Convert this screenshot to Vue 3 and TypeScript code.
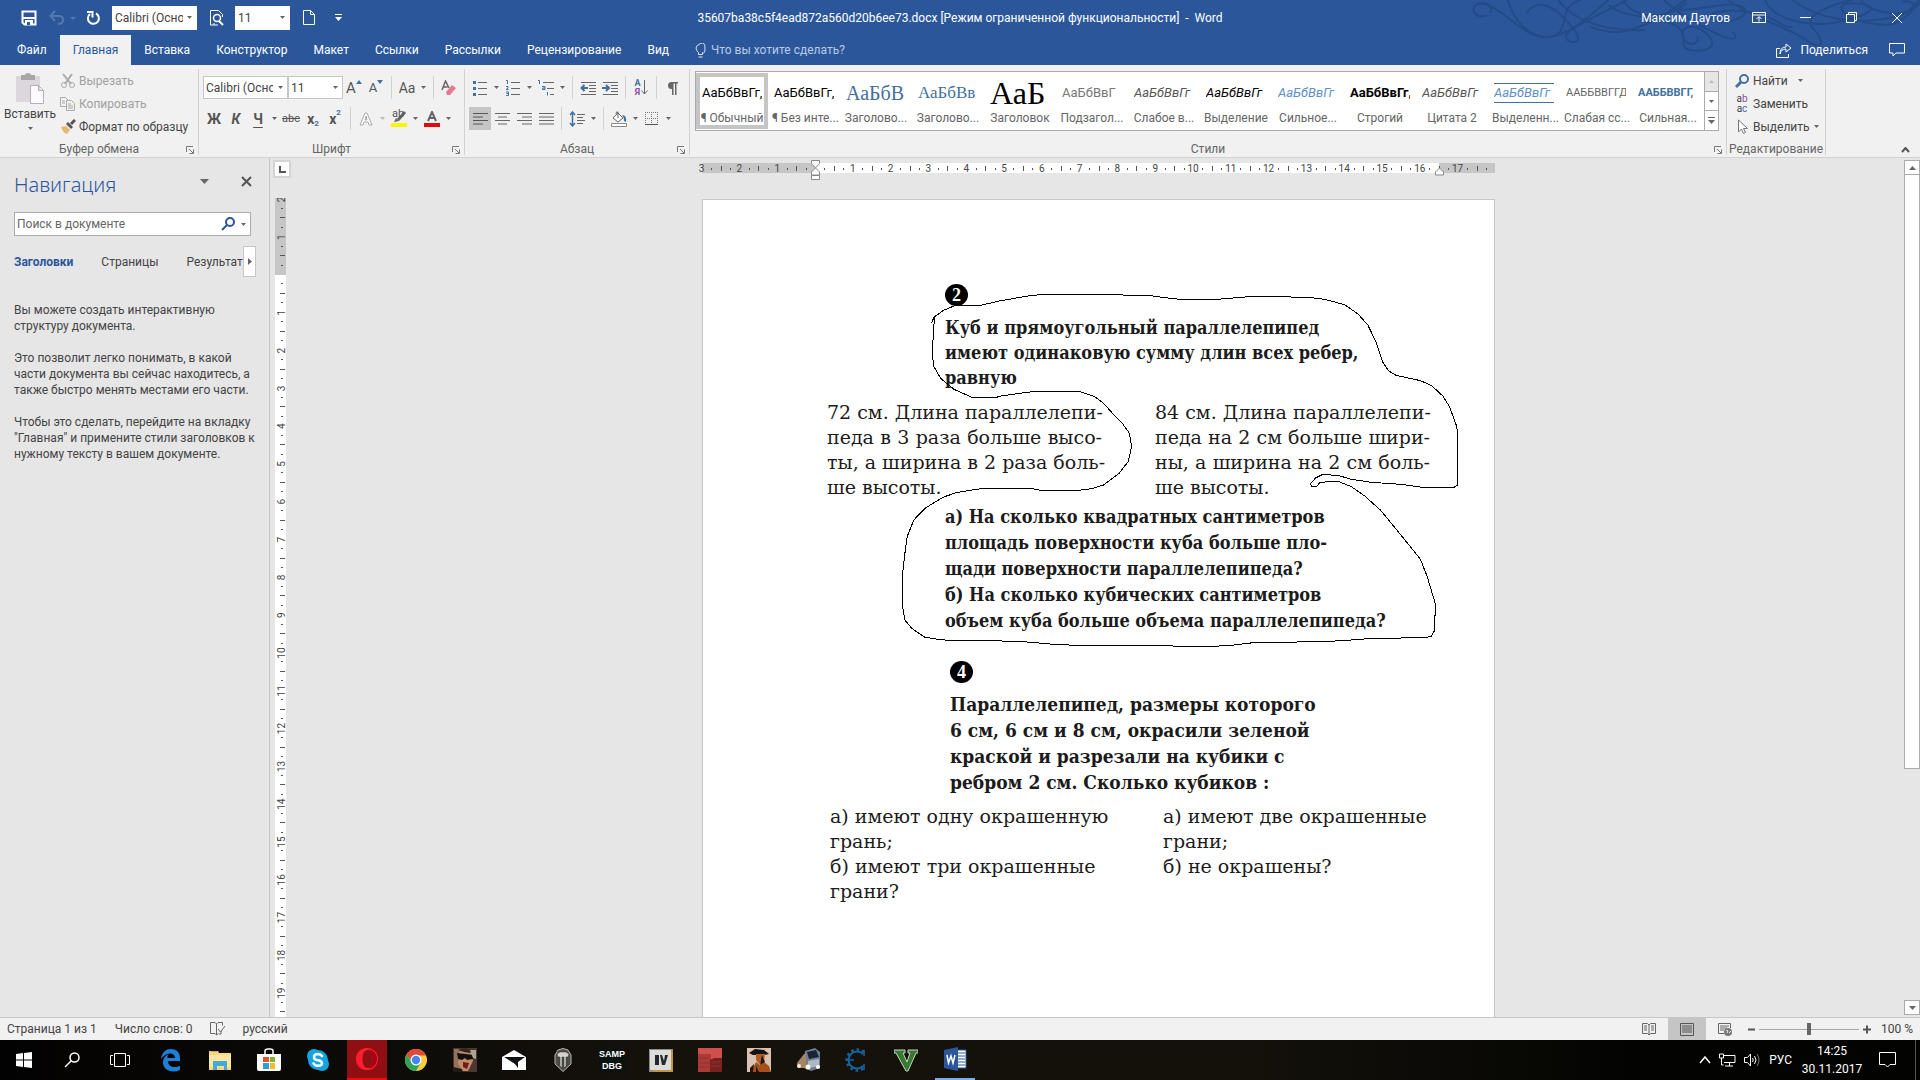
<script setup lang="ts">
import { ref } from 'vue'

interface StyleItem { sample: string; label: string; kind: string }
interface Tick { pos: number; kind: 'num' | 'dot' | 'bar'; text: string }

const tabs = ['Файл', 'Главная', 'Вставка', 'Конструктор', 'Макет', 'Ссылки', 'Рассылки', 'Рецензирование', 'Вид']
const activeTab = ref('Главная')
const query = ref('')
const zoom = ref(100)

const styles: StyleItem[] = [
  { sample: 'АаБбВвГг,', label: '¶ Обычный', kind: 'plain' },
  { sample: 'АаБбВвГг,', label: '¶ Без инте...', kind: 'plain' },
  { sample: 'АаБбВ', label: 'Заголово...', kind: 'h1' },
  { sample: 'АаБбВв', label: 'Заголово...', kind: 'h2' },
  { sample: 'АаБ', label: 'Заголовок', kind: 'title' },
  { sample: 'АаБбВвГ', label: 'Подзагол...', kind: 'subtitle' },
  { sample: 'АаБбВвГг', label: 'Слабое в...', kind: 'soft' },
  { sample: 'АаБбВвГг', label: 'Выделение', kind: 'em' },
  { sample: 'АаБбВвГг', label: 'Сильное...', kind: 'blue-em' },
  { sample: 'АаБбВвГг,', label: 'Строгий', kind: 'strong' },
  { sample: 'АаБбВвГг', label: 'Цитата 2', kind: 'soft' },
  { sample: 'АаБбВвГг', label: 'Выделенн...', kind: 'quote' },
  { sample: 'ААББВВГГД', label: 'Слабая сс...', kind: 'caps' },
  { sample: 'ААББВВГГ,', label: 'Сильная...', kind: 'caps-blue' },
]

const CM = 37.8
function makeTicks(from: number, to: number): Tick[] {
  const out: Tick[] = []
  for (let q = from * 4; q <= to * 4; q++) {
    if (q === 0) continue
    const part = Math.abs(q) % 4
    out.push({
      pos: (q / 4) * CM,
      kind: part === 0 ? 'num' : part === 2 ? 'bar' : 'dot',
      text: part === 0 ? String(Math.abs(q) / 4) : '',
    })
  }
  return out
}
const hTicks = makeTicks(-3, 17.75)
const vTicks = makeTicks(-2, 19.5)

const apps = ['edge', 'explorer', 'store', 'skype', 'opera', 'chrome', 'face', 'mail', 'tanks', 'samp', 'iv', 'red', 'sa', 'truck', 'ce', 'five', 'word']
const appNames: Record<string, string> = {
  edge: 'Edge', explorer: 'Проводник', store: 'Магазин', skype: 'Skype', opera: 'Opera', chrome: 'Chrome',
  face: 'Игра', mail: 'Почта', tanks: 'World of Tanks', samp: 'SAMP DBG', iv: 'GTA IV', red: 'Город',
  sa: 'San Andreas', truck: 'Truck', ce: 'Cheat Engine', five: 'GTA V', word: 'Word',
}
</script>

<template>
  <div class="window">
    <svg class="sheet" aria-hidden="true">
      <symbol id="caret" viewBox="0 0 7 4"><path d="M0 0h7L3.500 4z" fill="currentColor" /></symbol>
      <symbol id="launcher" viewBox="0 0 8 8"><path d="M.5 6V.5H7M3 3l4 4M7.500 3.500v4h-4" fill="none" stroke="#777" /></symbol>
      <symbol id="edge" viewBox="0 0 24 24"><path d="M2 11C3 4 7 1 12 1c6 0 9 4 9 9v3H9c0 4 3 6 7 6 2 0 3-.5 5-1v4c-2 1-4 1.500-6 1.500-7 0-11-4-11-9 0-4 2-7 6-8-1 1-2 2-1.500 3.500H16C16 7 14 5.500 11 5.500 7 5.500 4 8 2 11z" fill="#1e7fd6" /></symbol>
      <symbol id="explorer" viewBox="0 0 24 24"><path d="M1 3h9l1 2h12v17H1z" fill="#f5d77c" /><path d="M1 7h22v12H1z" fill="#fbe6a0" /><path d="M5 13h14v9h-3v-4H9v4H5z" fill="#47a9d8" /><path d="M3 3h6v1H3z" fill="#c9a545" /></symbol>
      <symbol id="store" viewBox="0 0 24 24"><path d="M8 7V3q0-2 3-2h2q3 0 3 2v4" fill="none" stroke="#fff" stroke-width="1.500" /><path d="M0 6h24v15q0 2-2 2H2q-2 0-2-2z" fill="#fff" /><path d="M6 9h6v5H6z" fill="#e5532d" /><path d="M13 9h5v5h-5z" fill="#7cb52b" /><path d="M6 15h6v6H6z" fill="#2a9fd8" /><path d="M13 15h5v6h-5z" fill="#f6bb2c" /></symbol>
      <symbol id="skype" viewBox="0 0 24 24"><circle cx="8" cy="8" r="7" fill="#14a5e0" /><circle cx="16" cy="16" r="7" fill="#14a5e0" /><circle cx="12" cy="12" r="10" fill="#14a5e0" /><path d="M16 8q-1.500-2-4-2-4 0-4 3t4 3.200q4 .6 4 3t-4 2.600q-3 0-4.500-2.500" fill="none" stroke="#fff" stroke-width="2.500" stroke-linecap="round" /></symbol>
      <symbol id="opera" viewBox="0 0 24 24"><path fill-rule="evenodd" d="M12 1c7 0 11 5 11 11s-4 11-11 11S1 18 1 12 5 1 12 1zm1 2c-4 0-5.500 4-5.500 9s1.500 9 5.500 9c3 0 4.500-4 4.500-9S16 3 13 3z" fill="#ff1e2d" /><path d="M13 3c5-1 9 4 9 9s-4 10-9 9c3 0 4.500-4 4.500-9S16 3 13 3z" fill="#a70014" /></symbol>
      <symbol id="chrome" viewBox="0 0 24 24"><circle cx="12" cy="12" r="11" fill="#f7cf3c" /><path d="M2.500 6.500A11 11 0 0 1 22 7.500H12l-4.500 6.500z" fill="#de4a3b" /><path d="M2.500 6.500A11 11 0 0 0 12 23l4.500-8H8z" fill="#2ea456" /><circle cx="12" cy="12" r="5.500" fill="#fff" /><circle cx="12" cy="12" r="4.200" fill="#4285f4" /></symbol>
      <symbol id="face" viewBox="0 0 24 24"><path d="M0 0h24v24H0z" fill="#4a3730" /><path d="M1 1h7l-2 8 2 13H1z" fill="#94725d" /><path d="M6 4q6-5 13 0l1 9-5 10H9L5 15z" fill="#c48b6b" /><path d="M4 5l17 2-1 4-6 1-2-2-3 2-4-1z" fill="#14100f" /><path d="M10 14l6 1-2 6-4-2z" fill="#6d1c1c" /><path d="M5 2q7-4 14 1l-2 2-6-1z" fill="#33241d" /><path d="M17 2h6v9l-3-1z" fill="#a9a398" /><path d="M0 19l9 2 1 3H0z" fill="#1f1a18" /></symbol>
      <symbol id="mail" viewBox="0 0 24 24"><path d="M0 9l12-7 12 7v13H0z" fill="#fff" /><path d="M2 9h21l-7 5v6l-3-4z" fill="#111" /></symbol>
      <symbol id="tanks" viewBox="0 0 24 24"><path d="M7 2l5-1.500L17 2l3 5v9l-8 7.500L4 16V7z" fill="#4d4c48" stroke="#b8b7ad" /><path d="M6 6l3-2h6l3 2-1 3h-2v9l-2 2V9h-2v11l-2-2V9H7z" fill="#d4d3cb" stroke="#333" stroke-width=".5" /></symbol>
      <symbol id="iv" viewBox="0 0 24 24"><path d="M0 1h24v23H0z" fill="#8d8d8d" /><path d="M1 2h21v20H1z" fill="#dcdcda" /><path d="M23 3v20H4" fill="none" stroke="#cf9a33" stroke-width="1.500" /><path d="M6 7h4v10H6zm5 0h2l2 6 1-6h3l-3 10h-3z" fill="#24282e" /></symbol>
      <symbol id="red" viewBox="0 0 24 24"><path d="M0 0h24v24H0z" fill="#cf504a" /><path d="M0 6h13v18H0z" fill="#aa3b37" /><path d="M12 12l4-2h8v14H12z" fill="#76231f" /><path d="M0 10h12M0 15h12M0 19h12M13 14h10M13 18h10" stroke="#933430" /></symbol>
      <symbol id="sa" viewBox="0 0 24 24"><path d="M0 0h24v24H0z" fill="#d9c4b4" /><path d="M2 5l6-4 9 1 5 4-5 1H6z" fill="#17110e" /><path d="M9 6h9l-1 8-5 2-3-4z" fill="#b05f2a" /><path d="M4 24l5-10 4 3 4-3 5 4 2 6z" fill="#a4501b" /><path d="M15 7l3 7-5 3zM3 20l4-4-1 8H3zM9 18l3 6H9z" fill="#27150c" /></symbol>
      <symbol id="truck" viewBox="0 0 24 24"><path d="M9 3l10-3 5 4v16l-9 3-7-3z" fill="#6f7f91" /><path d="M11 4l9-2 3 7-10 2z" fill="#182534" /><path d="M1 15l7-9 2 0v14l-8 0z" fill="#a58363" /><path d="M12 13l11-2v7l-11 2z" fill="#aeb8c2" /><circle cx="12" cy="19" r="2.500" fill="#fff8dc" /><circle cx="22" cy="19" r="2" fill="#fff" /><circle cx="3" cy="18" r="2" fill="#eee" /></symbol>
      <symbol id="ce" viewBox="0 0 24 24"><path d="M18 6A8.500 8.500 0 1 0 18 18" fill="none" stroke="#1565a0" stroke-width="2" /><path d="M19 4A10.500 10.500 0 1 0 19 20" fill="none" stroke="#1565a0" stroke-width="2.500" stroke-dasharray="2.500 3" /><path d="M1 12h8M19 2v6M19 16v6" stroke="#1565a0" stroke-width="1.500" /></symbol>
      <symbol id="five" viewBox="0 0 24 24"><path d="M0 2h11v3H9l4 9 3-9h-2V2h10v3h-2l-8 18h-2L2 5H0z" fill="#357a30" stroke="#c9d1c5" /></symbol>
      <symbol id="word" viewBox="0 0 24 24"><path d="M11 3h12v18H11z" fill="#fff" stroke="#2b579a" /><path d="M14 6h8M14 9h8M14 12h8M14 15h8M14 18h8" stroke="#2b579a" /><path d="M1 3l14-3v24L1 21z" fill="#2b579a" /><path d="M4 8l1.500 8 2.500-7 2 7L12 8" fill="none" stroke="#fff" stroke-width="1.500" /></symbol>
    </svg>

    <header class="titlebar">
      <svg class="swirls" viewBox="0 0 978 195" preserveAspectRatio="none" aria-hidden="true">
        <path d="M35 45C15 60-5 30 12 14S52 20 42 38M15 10C60 5 110 110 160 112 220 110 260 40 300 0M80 0C90 50 120 108 165 112 225 108 180 20 240 0M120 40C140 0 170 10 200 50S240 120 230 125 200 120 210 100 300 30 340 0M190 0C220 60 290 95 380 90M260 80C310 110 350 95 400 60S450 10 470 0M300 15C330 55 420 50 450 80S440 150 490 152 530 110 500 88 450 95 465 120 500 125 492 108M330 0C360 60 420 60 470 10M420 0C460 50 520 95 550 110S580 110 570 95M450 30C510 30 560 0 590 20S560 80 530 60 560 20 620 40 680 90 700 80M560 0C620 60 690 80 730 120S770 120 745 85 770 20 830 0M640 0C660 60 740 90 820 60S870 10 830 10 800 50 870 70 950 40 978 10M700 0C740 40 800 70 880 60S960 20 978 0M850 0C860 30 920 50 950 35S960 0 940 5" />
      </svg>
      <div class="quick">
        <button aria-label="Сохранить" class="q save"><svg width="16" height="16" viewBox="0 0 16 16"><path d="M1.500 1.500h13v13h-11l-2-2z" fill="none" stroke="#fff" stroke-width="2" /><path d="M2 7h12v2H2zM4 10h8v5H4z" fill="#fff" /><path d="M6 12h3v3H6z" fill="#2b579a" /></svg></button>
        <button aria-label="Отменить" class="q undo"><svg width="28" height="16" viewBox="0 0 28 16"><path d="M2 6h8q4 0 4 4t-5 4M6 1L1.500 6 6 11" fill="none" stroke="#5478b0" stroke-width="2" /><path d="M21 7h6l-3 3z" fill="#5478b0" /></svg></button>
        <button aria-label="Повторить" class="q redo"><svg width="16" height="16" viewBox="0 0 16 16"><path d="M5 4A5.500 5.500 0 1 0 11 3.500M2 2h5.500v5.500" fill="none" stroke="#fff" stroke-width="2" /></svg></button>
        <span class="combo wide"><select aria-label="Шрифт, панель быстрого доступа"><option>Calibri (Основной текст)</option></select><svg class="caret"><use href="#caret" /></svg></span>
        <button aria-label="Просмотр" class="q look"><svg width="16" height="16" viewBox="0 0 16 16"><path d="M9 15H1.500V.5h8l4 4V7M5 13v2" fill="none" stroke="#fff" /><circle cx="8" cy="8" r="3.500" fill="none" stroke="#fff" stroke-width="1.500" /><path d="M10 11l4 4" stroke="#fff" stroke-width="2" /></svg></button>
        <span class="combo small"><select aria-label="Размер, панель быстрого доступа"><option>11</option></select><svg class="caret"><use href="#caret" /></svg></span>
        <button aria-label="Создать" class="q new"><svg width="12" height="15" viewBox="0 0 12 15"><path d="M.5.5h7l4 4v10H.5zM7.500.5v4h4" fill="none" stroke="#fff" /></svg></button>
        <button aria-label="Настройка панели" class="q more"><svg width="7" height="7" viewBox="0 0 7 7"><path d="M0 0h7v1H0zM0 3h7L3.500 7z" fill="#fff" /></svg></button>
      </div>
      <h1>35607ba38c5f4ead872a560d20b6ee73.docx [Режим ограниченной функциональности]&nbsp; -&nbsp; Word</h1>
      <div class="account">
        <span class="user">Максим Даутов</span>
        <button aria-label="Параметры ленты"><svg width="14" height="12" viewBox="0 0 14 12"><path d="M.5.5h13v10H.5zM.5 3h13M7 9.500V5M4.500 7L7 4.500 9.500 7" fill="none" stroke="#fff" /></svg></button>
        <button aria-label="Свернуть"><svg width="11" height="11"><path d="M0 5.500h11" stroke="#fff" /></svg></button>
        <button aria-label="Восстановить"><svg width="11" height="11" viewBox="0 0 11 11"><path d="M.5 2.500h8v8h-8zM2.500 2V.5h8v8H9" fill="none" stroke="#fff" /></svg></button>
        <button aria-label="Закрыть"><svg width="12" height="12"><path d="M1 1l10 10M11 1L1 11" stroke="#fff" /></svg></button>
      </div>
    </header>

    <nav class="tabs" aria-label="Лента">
      <button v-for="t in tabs" :key="t" :class="{ active: t === activeTab }" @click="activeTab = t">{{ t }}</button>
      <button class="tell"><svg width="11" height="15" viewBox="0 0 11 15"><path d="M3.500 11.500V9.500Q1 7.500 1 5t4.500-4.500T10 5 7.500 9.500v2zM3.500 14h4" fill="none" stroke="#dbe4f2" /></svg>Что вы хотите сделать?</button>
      <button class="share"><svg width="16" height="15" viewBox="0 0 16 15"><path d="M4 5.500H.5v9h12V11M4 11q1-5 6-5V9l5-4-5-4v3Q4 4 4 11z" fill="none" stroke="#fff" /></svg>Поделиться</button>
      <button class="comment" aria-label="Комментарии"><svg width="16" height="14" viewBox="0 0 16 14"><path d="M.5.5h15v9.500H7l-3 3v-3H.5z" fill="none" stroke="#fff" /></svg></button>
    </nav>

    <section class="ribbon" aria-label="Главная">
      <div class="group">
        <div class="clip">
          <button class="paste">
            <svg width="30" height="32" viewBox="0 0 30 32"><path d="M1 3h24v26H1z" fill="#dcd7dc" /><path d="M6 2h4q0-2 3-2t3 2h4v5H6z" fill="#a9a5a9" /><path d="M15.500 12.500h8l5 5v13h-13zM23.500 12.500v5h5" fill="#fcfafc" stroke="#b3afb3" /></svg>
            <span>Вставить</span><svg class="caret"><use href="#caret" /></svg>
          </button>
          <div class="stack">
            <button class="off"><svg width="16" height="16" viewBox="0 0 16 16"><path d="M3 1l8 10M12 1L5 11" stroke="#aaa" stroke-width="2" /><circle cx="4" cy="12" r="2.500" fill="none" stroke="#aaa" /><circle cx="12" cy="12" r="2.500" fill="none" stroke="#aaa" /></svg>Вырезать</button>
            <button class="off"><svg width="16" height="16" viewBox="0 0 16 16"><path d="M6 10.500H.5v-9h5l3 3M2 5h3M2 7h3M6.500 4.500h5l3 3v7h-8zM8 8h3M8 10h5M8 12h5" fill="none" stroke="#aaa" /></svg>Копировать</button>
            <button><svg width="16" height="16" viewBox="0 0 16 16"><path d="M1 8l5-1 4 4-3 4q-4-1-6-7z" fill="#e9b86f" /><path d="M6 5l5 5 2-2-5-5z" fill="#555" /><path d="M11 5l4-4" stroke="#555" stroke-width="3" /></svg>Формат по образцу</button>
          </div>
        </div>
        <footer>Буфер обмена<button aria-label="Буфер обмена: параметры"><svg width="8" height="8"><use href="#launcher" /></svg></button></footer>
      </div>

      <div class="group">
        <div class="rows">
          <div class="row">
            <span class="combo wide edged"><select aria-label="Шрифт"><option>Calibri (Основной текст)</option></select><svg class="caret"><use href="#caret" /></svg></span>
            <span class="combo small edged"><select aria-label="Размер шрифта"><option>11</option></select><svg class="caret"><use href="#caret" /></svg></span>
            <button class="ic grow">A<svg width="6" height="4" viewBox="0 0 6 4"><path d="M0 4l3-4 3 4z" fill="#41719c" /></svg></button>
            <button class="ic shrink">A<svg width="6" height="4" viewBox="0 0 6 4"><path d="M0 0l3 4 3-4z" fill="#41719c" /></svg></button>
            <i class="sep"></i>
            <button class="ic split case"><span>Aa</span><svg class="caret"><use href="#caret" /></svg></button>
            <i class="sep"></i>
            <button class="ic" aria-label="Очистить формат"><svg width="16" height="16" viewBox="0 0 16 16"><path d="M1 10L4.500 1 8 8M2.500 7h4" fill="none" stroke="#666" stroke-width="1.500" /><path d="M5 12l6-7 4 3-6 7H6z" fill="#e8788c" /></svg></button>
          </div>
          <div class="row">
            <button class="ic bold">Ж</button>
            <button class="ic bold ital">К</button>
            <button class="ic split bold under"><span>Ч</span><svg class="caret"><use href="#caret" /></svg></button>
            <button class="ic strike">abc</button>
            <button class="ic bold">x<sub>2</sub></button>
            <button class="ic bold">x<sup>2</sup></button>
            <i class="sep"></i>
            <button class="ic split pale" aria-label="Эффекты"><svg width="16" height="16" viewBox="0 0 16 16"><path d="M2 14L7 2h2l5 12h-3l-1-3H6l-1 3zM7 9h2L8 5z" fill="#fff" stroke="#aaa" /></svg><svg class="caret"><use href="#caret" /></svg></button>
            <button class="ic split mark" aria-label="Цвет выделения"><span class="ab">ab</span><svg class="pen" width="16" height="16" viewBox="0 0 16 16"><path d="M14 1L7 9" stroke="#666" stroke-width="3" /><path d="M3 11l2-4 3 3z" fill="#666" /><path d="M0 12h16v4H0z" fill="#fdf500" /></svg><svg class="caret"><use href="#caret" /></svg></button>
            <button class="ic split" aria-label="Цвет текста"><svg width="16" height="16" viewBox="0 0 16 16"><path d="M4 10L8 1l4 9M5.500 7h5" fill="none" stroke="#666" stroke-width="2" /><path d="M0 12h16v4H0z" fill="#e00b0b" /></svg><svg class="caret"><use href="#caret" /></svg></button>
          </div>
        </div>
        <footer>Шрифт<button aria-label="Шрифт: параметры"><svg width="8" height="8"><use href="#launcher" /></svg></button></footer>
      </div>

      <div class="group">
        <div class="rows para">
          <div class="row">
            <button class="ic split" aria-label="Маркеры"><svg width="16" height="16" viewBox="0 0 16 16"><path d="M1 1h3v3H1zM1 7h3v3H1zM1 13h3v3H1z" fill="#41719c" /><path d="M6 2.500h9M6 8.500h9M6 14.500h9" stroke="#666" /></svg><svg class="caret"><use href="#caret" /></svg></button>
            <button class="ic split" aria-label="Нумерация"><svg width="16" height="16" viewBox="0 0 16 16"><path d="M1 .5h1.500V4M1 6.500h2v1.500L1 9.500h2.500M1 12h2.500v3.500H1M1.500 13.500h2" fill="none" stroke="#41719c" /><path d="M6 2.500h9M6 8.500h9M6 14.500h9" stroke="#666" /></svg><svg class="caret"><use href="#caret" /></svg></button>
            <button class="ic split" aria-label="Многоуровневый список"><svg width="16" height="16" viewBox="0 0 16 16"><path d="M0 .5h1.500V4M4 6.500h3v3H4.500V8H7M9.500 12v3.500" fill="none" stroke="#41719c" /><path d="M5 2.500h11M9 8.500h7M12 14.500h4" stroke="#666" /></svg><svg class="caret"><use href="#caret" /></svg></button>
            <i class="sep"></i>
            <button class="ic" aria-label="Уменьшить отступ"><svg width="16" height="14" viewBox="0 0 16 14"><path d="M1 1.500h15M9 4.500h7M9 7.500h7M9 10.500h7M1 13.500h15" stroke="#666" /><path d="M8 7H2M4.500 4L1.500 7l3 3" fill="none" stroke="#41719c" stroke-width="2" /></svg></button>
            <button class="ic" aria-label="Увеличить отступ"><svg width="16" height="14" viewBox="0 0 16 14"><path d="M1 1.500h15M9 4.500h7M9 7.500h7M9 10.500h7M1 13.500h15" stroke="#666" /><path d="M0 7h6M4 4l3 3-3 3" fill="none" stroke="#41719c" stroke-width="2" /></svg></button>
            <i class="sep"></i>
            <button class="ic sort" aria-label="Сортировка"><span><b>А</b><b>Я</b></span><svg width="7" height="15" viewBox="0 0 7 15"><path d="M3.500 0v14M.5 10.500l3 3.500 3-3.500" fill="none" stroke="#666" /></svg></button>
            <i class="sep"></i>
            <button class="ic" aria-label="Все знаки"><svg width="11" height="14" viewBox="0 0 11 14"><path d="M11 1H4.500A3.500 3.500 0 0 0 4.500 8H5v6h1.500V2.500H8V14h1.500V2.500H11z" fill="#666" /></svg></button>
          </div>
          <div class="row">
            <button class="ic on" aria-label="По левому краю"><svg width="15" height="12"><path d="M0 .5h15M0 4h10M0 7.500h15M0 11h10" stroke="#555" /></svg></button>
            <button class="ic" aria-label="По центру"><svg width="15" height="12"><path d="M0 .5h15M3 4h9M0 7.500h15M3 11h9" stroke="#666" /></svg></button>
            <button class="ic" aria-label="По правому краю"><svg width="15" height="12"><path d="M0 .5h15M5 4h10M0 7.500h15M5 11h10" stroke="#666" /></svg></button>
            <button class="ic" aria-label="По ширине"><svg width="15" height="12"><path d="M0 .5h15M0 4h15M0 7.500h15M0 11h15" stroke="#666" /></svg></button>
            <i class="sep"></i>
            <button class="ic split" aria-label="Интервал"><svg width="16" height="16" viewBox="0 0 16 16"><path d="M3.500 1v14M1 4l2.500-3L6 4M1 12l2.500 3L6 12" fill="none" stroke="#41719c" stroke-width="1.500" /><path d="M8 3.500h8M8 6.500h6M8 9.500h8M8 12.500h6" stroke="#666" /></svg><svg class="caret"><use href="#caret" /></svg></button>
            <i class="sep"></i>
            <button class="ic split" aria-label="Заливка"><svg width="16" height="16" viewBox="0 0 16 16"><path d="M2 7l5-5 5 5-5 4zM7 7V1q-2-1-2 2" fill="#fff" stroke="#666" /><path d="M11 4q5 0 4 7l-2-1q0-4-2-6z" fill="#41719c" /><path d="M.5 12.500h15v3H.5z" fill="#fff" stroke="#888" /></svg><svg class="caret"><use href="#caret" /></svg></button>
            <button class="ic split" aria-label="Границы"><svg width="14" height="14" viewBox="0 0 14 14"><path d="M.5 0v12M6.500 0v12M12.500 0v12M0 .5h13M0 6.500h13" stroke="#777" stroke-dasharray="1 1" /><path d="M0 12.500h13" stroke="#555" /></svg><svg class="caret"><use href="#caret" /></svg></button>
          </div>
        </div>
        <footer>Абзац<button aria-label="Абзац: параметры"><svg width="8" height="8"><use href="#launcher" /></svg></button></footer>
      </div>

      <div class="group styles">
        <div class="gallery">
          <button v-for="(s, i) in styles" :key="i" class="style" :class="{ picked: i === 0 }">
            <span class="sample" :class="s.kind">{{ s.sample }}</span>
            <span class="name">{{ s.label }}</span>
          </button>
          <div class="spin">
            <button class="dim" aria-label="Вверх"><svg class="caret up"><use href="#caret" /></svg></button>
            <button aria-label="Вниз"><svg class="caret"><use href="#caret" /></svg></button>
            <button aria-label="Ещё"><svg width="7" height="7" viewBox="0 0 7 7"><path d="M0 0h7v1H0zM0 3h7L3.500 7z" fill="#666" /></svg></button>
          </div>
        </div>
        <footer>Стили<button aria-label="Стили: параметры"><svg width="8" height="8"><use href="#launcher" /></svg></button></footer>
      </div>

      <div class="group edit">
        <div class="stack">
          <button><svg width="14" height="16" viewBox="0 0 14 16"><circle cx="9" cy="6" r="4" fill="none" stroke="#41719c" stroke-width="2" /><path d="M6 9l-5 5" stroke="#41719c" stroke-width="3" /></svg>Найти<svg class="caret far"><use href="#caret" /></svg></button>
          <button><span class="swap"><b>a<em>b</em></b><b>a<i>c</i></b></span>Заменить</button>
          <button><svg width="14" height="16" viewBox="0 0 14 16"><path d="M3.500 1v12l3-3 2 4.500 2-1-2-4h4z" fill="#fff" stroke="#777" /></svg>Выделить<svg class="caret"><use href="#caret" /></svg></button>
        </div>
        <footer>Редактирование</footer>
      </div>
      <button class="fold" aria-label="Свернуть ленту"><svg width="9" height="6"><path d="M1 5l3.500-4L8 5" fill="none" stroke="#555" stroke-width="2" /></svg></button>
    </section>

    <main class="work">
      <aside class="pane">
        <div class="pane-head">
          <h2>Навигация</h2>
          <button aria-label="Параметры области"><svg width="9" height="5"><path d="M0 0h9L4.500 5z" fill="#666" /></svg></button>
          <button aria-label="Закрыть область"><svg width="11" height="11"><path d="M1 1l9 9M10 1l-9 9" stroke="#555" stroke-width="2" /></svg></button>
        </div>
        <div class="search">
          <input v-model="query" type="text" aria-label="Поиск в документе" placeholder="Поиск в документе" />
          <button aria-label="Найти"><svg width="14" height="14" viewBox="0 0 14 14"><circle cx="9" cy="5" r="4" fill="none" stroke="#2b579a" stroke-width="2" /><path d="M6 8l-5 5" stroke="#2b579a" stroke-width="2" /></svg></button>
          <button aria-label="Параметры поиска"><svg class="caret"><use href="#caret" /></svg></button>
        </div>
        <div class="pane-tabs">
          <div class="strip"><button class="cur">Заголовки</button><button>Страницы</button><button>Результаты</button></div>
          <button class="next" aria-label="Далее"><svg width="4" height="7"><path d="M0 0l4 3.500L0 7z" fill="#666" /></svg></button>
        </div>
        <p>Вы можете создать интерактивную<br />структуру документа.</p>
        <p>Это позволит легко понимать, в какой<br />части документа вы сейчас находитесь, а<br />также быстро менять местами его части.</p>
        <p>Чтобы это сделать, перейдите на вкладку<br />"Главная" и примените стили заголовков к<br />нужному тексту в вашем документе.</p>
      </aside>

      <div class="vrule">
        <button class="corner" aria-label="Тип табуляции"><svg width="7" height="7"><path d="M1 0v6h6" fill="none" stroke="#555" stroke-width="2" /></svg></button>
        <svg class="vscale" width="12" height="819" aria-hidden="true">
          <path d="M0 0h11v77H0z" fill="#c6c6c6" /><path d="M0 77h11v742H0z" fill="#fff" />
          <template v-for="(t, i) in vTicks" :key="i">
            <text v-if="t.kind === 'num'" text-anchor="middle" :transform="`translate(10 ${77 + t.pos}) rotate(-90)`">{{ t.text }}</text>
            <rect v-else :x="t.kind === 'bar' ? 5 : 6" :y="Math.round(76 + t.pos)" :width="t.kind === 'bar' ? 5 : 2" height="1" />
          </template>
        </svg>
      </div>

      <div class="desk">
        <svg class="hscale" width="793" height="22" aria-hidden="true">
          <path d="M0 5h793v10H0z" fill="#c6c6c6" /><path d="M113 5h624v10H113z" fill="#fff" />
          <template v-for="(t, i) in hTicks" :key="i">
            <text v-if="t.kind === 'num'" text-anchor="middle" :x="113 + t.pos" y="14">{{ t.text }}</text>
            <rect v-else :x="Math.round(113 + t.pos)" :y="t.kind === 'bar' ? 8 : 10" width="1" :height="t.kind === 'bar' ? 5 : 2" />
          </template>
          <path d="M109.500 2.500h8v3l-4 4.500-4-4.500zM113.500 10l4 4v3h-8v-3zM109.500 17.500h8v4h-8zM737.500 10l4 4v3h-8v-3z" fill="#fff" stroke="#888" />
        </svg>
        <article class="page">
          <div class="inset"><span class="badge">2</span></div>
          <div class="inset bold first">
            <div>Куб и прямоугольный параллелепипед</div>
            <div>имеют одинаковую сумму длин всех ребер,</div>
            <div>равную</div>
          </div>
          <div class="cols spread">
            <div><div>72 см. Длина параллелепи-</div><div>педа в 3 раза больше высо-</div><div>ты, а ширина в 2 раза боль-</div><div>ше высоты.</div></div>
            <div><div>84 см. Длина параллелепи-</div><div>педа на 2 см больше шири-</div><div>ны, а ширина на 2 см боль-</div><div>ше высоты.</div></div>
          </div>
          <div class="inset bold second">
            <div>а) На сколько квадратных сантиметров</div>
            <div>площадь поверхности куба больше пло-</div>
            <div>щади поверхности параллелепипеда?</div>
            <div>б) На сколько кубических сантиметров</div>
            <div>объем куба больше объема параллелепипеда?</div>
          </div>
          <div class="inset four"><span class="badge">4</span></div>
          <div class="inset bold four third">
            <div>Параллелепипед, размеры которого</div>
            <div>6 см, 6 см и 8 см, окрасили зеленой</div>
            <div>краской и разрезали на кубики с</div>
            <div>ребром 2 см. Сколько кубиков :</div>
          </div>
          <div class="cols last">
            <div><div>а) имеют одну окрашенную</div><div>грань;</div><div>б) имеют три окрашенные</div><div>грани?</div></div>
            <div><div>а) имеют две окрашенные</div><div>грани;</div><div>б) не окрашены?</div></div>
          </div>
          <svg class="ink" width="791" height="818" aria-hidden="true">
            <path transform="translate(97 70) scale(.4464 .3333)" vector-effect="non-scaling-stroke" d="M295 158L300 142L320 122L345 108L398 108L450 92L520 76L555 73L690 74L785 77L840 87L935 88L1015 79L1140 82L1175 88L1220 104L1250 132L1272 165L1290 215L1305 275L1318 302L1335 316L1390 332L1415 347L1440 378L1455 410L1470 465L1474 490L1473 645L1465 652L1395 652L1345 643L1280 637L1235 628L1205 616L1170 614L1155 624L1143 642L1147 650L1158 648L1165 637L1205 634L1235 650L1265 678L1300 720L1340 785L1390 868L1405 920L1423 1000L1422 1080L1415 1098L1405 1102L1240 1108L1230 1112L1090 1117L1010 1119L955 1128L840 1129L830 1127L585 1125L490 1114L320 1110L280 1102L250 1075L235 1050L230 1010L229 920L234 860L240 800L255 750L280 715L320 682L350 668L405 656L520 656L540 661L610 663L655 656L680 645L715 610L735 575L743 530L738 490L722 460L700 430L680 400L660 380L630 366L520 365L450 378L440 382L385 382L345 358L315 325L300 290L296 250L299 190L301 145" />
          </svg>
        </article>
      </div>

      <div class="scroll">
        <button aria-label="Прокрутить вверх"><svg width="7" height="4"><path d="M0 4h7L3.500 0z" fill="#666" /></svg></button>
        <div class="track"><div class="thumb"></div></div>
        <button aria-label="Прокрутить вниз"><svg width="7" height="4"><path d="M0 0h7L3.500 4z" fill="#666" /></svg></button>
      </div>
    </main>

    <footer class="status">
      <span>Страница 1 из 1</span><span>Число слов: 0</span>
      <svg width="15" height="14" viewBox="0 0 15 14"><path d="M6.500 13V2L5 .5H.5v11H5l1.500 1.500 2-1.500M6.500 2L8 .5h4.500v3M8 7l2.500 3L15 4M11 9v3H9" fill="none" stroke="#666" /></svg>
      <span>русский</span>
      <div class="views">
        <button aria-label="Чтение"><svg width="14" height="14" viewBox="0 0 14 14"><path d="M.5 1.500h5L7 3l1.500-1.500h5v10h-5L7 13l-1.500-1.500h-5zM7 3v10M2 4h3M2 6h3M2 8h3M9 4h3M9 6h3M9 8h3" fill="none" stroke="#666" /></svg></button>
        <button class="on" aria-label="Разметка"><svg width="14" height="13" viewBox="0 0 14 13"><path d="M.5.5h13v12H.5zM2 3h10M2 5h10M2 7h10M2 9h10" fill="none" stroke="#555" /></svg></button>
        <button aria-label="Веб-документ"><svg width="14" height="13" viewBox="0 0 14 13"><path d="M6 10.500H.5V.5h12V5M2 3h9M2 5h7M2 7h4" fill="none" stroke="#666" /><circle cx="10" cy="9" r="4" fill="#777" /><path d="M8 7l2 1-1 2M11 10l2-2" stroke="#eee" fill="none" /></svg></button>
      </div>
      <button class="zo" aria-label="Уменьшить"><svg width="7" height="9"><path d="M0 4.500h7" stroke="#555" stroke-width="2" /></svg></button>
      <input v-model="zoom" type="range" min="10" max="190" aria-label="Масштаб" />
      <button class="zo" aria-label="Увеличить"><svg width="8" height="9"><path d="M0 4.500h8M4 .5v8" stroke="#555" stroke-width="2" /></svg></button>
      <span class="pct">{{ zoom }} %</span>
    </footer>

    <footer class="taskbar">
      <button class="sys" aria-label="Пуск"><svg width="16" height="16" viewBox="0 0 16 16"><path d="M0 2l7-1v6.500H0zM8 1l8-1v7.500H8zM0 8.500h7V15l-7-1zM8 8.500h8V16l-8-1z" fill="#fff" /></svg></button>
      <button class="sys" aria-label="Поиск"><svg width="16" height="16" viewBox="0 0 16 16"><circle cx="10.500" cy="5.500" r="4.500" fill="none" stroke="#fff" stroke-width="1.500" /><path d="M7 9l-6 6" stroke="#fff" stroke-width="1.500" /></svg></button>
      <button class="sys" aria-label="Представление задач"><svg width="20" height="14" viewBox="0 0 20 14"><path d="M4.500.5h11v13h-11zM3 2.500H.5v9H3M17 2.500h2.500v9H17" fill="none" stroke="#fff" /></svg></button>
      <div class="apps">
        <button v-for="a in apps" :key="a" :class="a" :aria-label="appNames[a]">
          <span v-if="a === 'samp'" class="dbg">SAMP<br />DBG</span>
          <svg v-else width="24" height="24"><use :href="'#' + a" /></svg>
        </button>
      </div>
      <div class="tray">
        <button aria-label="Скрытые значки"><svg width="12" height="8"><path d="M1 7l5-6 5 6" fill="none" stroke="#fff" stroke-width="1.500" /></svg></button>
        <button aria-label="Сеть"><svg width="17" height="14" viewBox="0 0 17 14"><path d="M5 2.500h11v7H5M10.500 10v3M6 13h8M.5 1h4v4h-4zM2.500 5v7h2" fill="none" stroke="#fff" /></svg></button>
        <button aria-label="Громкость"><svg width="17" height="14" viewBox="0 0 17 14"><path d="M.5 4.500h3l3-3.500v12l-3-3.500h-3zM8.500 5q1.500 2 0 4M10.500 3q3 4 0 8" fill="none" stroke="#fff" /><path d="M13 1q4 6 0 12" fill="none" stroke="#777" /></svg></button>
        <button class="lang">РУС</button>
        <button class="clock"><span>14:25</span><span>30.11.2017</span></button>
        <button class="note" aria-label="Уведомления"><svg width="17" height="16" viewBox="0 0 17 16"><path d="M.5.5h16v12H11L8.500 15 6 12.500H.5z" fill="none" stroke="#fff" /></svg></button>
        <i class="show"></i>
      </div>
    </footer>
  </div>
</template>

<style>
body { margin: 0; overflow: hidden; }
</style>

<style scoped>
* { box-sizing: border-box; }
.window { display: flex; flex-direction: column; height: 100vh; font: 12px/16px Roboto, 'Noto Sans', sans-serif; color: #444; background: #e6e6e6; overflow: hidden; }
.sheet { position: absolute; width: 0; height: 0; }
button { display: flex; align-items: center; justify-content: center; margin: 0; padding: 0; border: 0; background: none; font: inherit; color: inherit; white-space: nowrap; flex: none; }
svg { flex: none; display: block; }
.caret { width: 5px; height: 3px; color: #666; }
.caret.up { transform: scaleY(-1); }

.titlebar { position: relative; display: grid; grid-template-columns: 1fr auto 1fr; align-items: center; height: 35px; background: #2b579a; color: #fff; }
.swirls { position: absolute; right: 0; top: 0; width: 449px; height: 65px; z-index: 1; pointer-events: none; }
.swirls path { fill: none; stroke: #234b88; stroke-width: 2; vector-effect: non-scaling-stroke; }
.titlebar > :not(.swirls) { position: relative; z-index: 2; }
.titlebar h1 { margin: 0; font-size: 12px; font-weight: 400; white-space: nowrap; }
.quick { display: flex; align-items: center; padding-left: 21px; }
.undo { margin-left: 12px; }
.redo { margin-left: 8px; margin-right: 11px; }
.look { margin: 0 10px 0 12px; }
.new { margin: 0 20px 0 13px; }
.account { display: flex; align-items: center; justify-content: flex-end; padding-right: 6px; gap: 12px; }
.account button { width: 34px; height: 30px; }

.combo { position: relative; display: block; height: 24px; flex: none; }
.combo.wide { width: 85px; }
.combo.small { width: 55px; }
.combo select { appearance: none; width: 100%; height: 100%; margin: 0; padding: 0 14px 0 3px; border: 0; border-radius: 0; background: #fff; font: inherit; color: #444; text-overflow: clip; }
.combo .caret { position: absolute; right: 5px; top: 10px; }
.edged { height: 23px; }
.edged select { border: 1px solid #c6c6c6; padding-left: 2px; }

.tabs { display: flex; height: 30px; background: #2b579a; color: #fff; padding-left: 4px; }
.tabs button { position: relative; z-index: 2; padding: 0 13px; }
.tabs .active { background: #f1f1f1; color: #2b579a; }
.tabs .tell { gap: 5px; color: #b8cbe8; }
.tabs .share { margin-left: auto; gap: 8px; padding: 0 21px; }
.tabs .comment { padding: 0 15px 0 0; }

.ribbon { display: flex; height: 93px; padding: 4px 0 2px; background: #f1f1f1; border-bottom: 1px solid #d2d2d2; }
.group { display: flex; flex-direction: column; border-right: 1px solid #d2d2d2; flex: none; }
.group > footer { position: relative; margin-top: auto; line-height: 12px; text-align: center; color: #666; white-space: nowrap; }
.group > footer button { position: absolute; right: 4px; top: 3px; }
.clip { display: flex; width: 198px; }
.paste { flex-direction: column; justify-content: flex-start; width: 60px; padding-top: 4px; }
.paste span { margin: 1px 0 5px; }
.stack button { height: 23px; justify-content: flex-start; gap: 3px; }
.off { color: #a0a0a0; }
.rows { display: flex; flex-direction: column; gap: 8px; padding: 7px 4px 0; }
.para { padding-right: 6px; }
.row { display: flex; height: 23px; }
.ic { width: 22px; color: #555; }
.split { width: 33px; justify-content: flex-start; }
.split > :first-child { width: 22px; text-align: center; flex: none; }
.split .caret { margin-left: 3px; }
.sep { width: 1px; margin: 0 4px; background: #d2d2d2; }
.grow { font-size: 15px; }
.shrink { font-size: 13px; }
.grow svg, .shrink svg { align-self: flex-start; margin-top: 4px; }
.case { font-size: 14px; }
.bold { font-weight: 700; font-size: 14px; }
.ital { font-style: italic; }
.under span { text-decoration: underline; text-underline-offset: 3px; }
.strike { text-decoration: line-through; font-size: 11px; }
.bold sub, .bold sup { font-size: 8px; line-height: 8px; color: #41719c; }
.bold sub { align-self: flex-end; margin-bottom: 2px; }
.bold sup { align-self: flex-start; margin-top: 2px; }
.pale .caret { color: #bbb; }
.mark { position: relative; }
.mark .ab { position: absolute; left: 3px; top: 0; width: 14px; font-size: 11px; line-height: 14px; }
.mark .pen { width: 16px; margin: 0 3px; }
.sort span { display: flex; flex-direction: column; font-size: 9px; line-height: 9px; color: #41719c; }
.sort b + b { color: #8b4fa0; }
.on { background: #c5c5c5; }

.styles { padding-top: 2px; }
.gallery { display: flex; height: 60px; margin: 0 7px 0 5px; border: 1px solid #ababab; background: #fff; }
.style { width: 72px; height: 56px; margin-top: 1px; flex-direction: column; padding: 0 4px; border: 0 solid #c5c5c5; }
.picked { padding: 0; border-width: 4px; }
.sample { display: flex; align-items: center; height: 32px; width: 60px; overflow: hidden; font-size: 13px; color: #000; }
.name { width: 64px; height: 16px; font-size: 12px; line-height: 18px; color: #666; text-align: center; }
.h1, .h2, .title { font-family: 'Liberation Serif', serif; }
.h1 { font-size: 20px; color: #41719c; }
.h2 { font-size: 17px; color: #41719c; }
.title { font-size: 32px; }
.subtitle { color: #777; }
.soft { font-style: italic; color: #555; }
.em { font-style: italic; }
.blue-em { font-style: italic; color: #5b8fc4; }
.strong { font-weight: 700; }
.quote { font-style: italic; color: #5b8fc4; height: 20px; margin: 6px 0; border-top: 1px solid #41719c; border-bottom: 1px solid #41719c; }
.caps { font-size: 11px; color: #666; }
.caps-blue { font-size: 11px; color: #41719c; font-weight: 700; }
.spin { display: flex; flex-direction: column; width: 14px; border-left: 1px solid #ababab; }
.spin button { flex: 1; }
.spin button + button { border-top: 1px solid #ababab; }
.spin .dim { background: #e6e6e6; }
.spin .dim .caret { color: #bbb; }
.edit { width: 99px; }
.edit .stack { padding-left: 8px; }
.edit .stack button { gap: 4px; }
.edit .far { margin-left: 6px; }
.swap { display: flex; flex-direction: column; width: 14px; font-size: 10px; line-height: 10px; align-items: center; }
.swap b { font-weight: 400; }
.swap em { font-style: normal; color: #8b4fa0; }
.swap i { font-style: normal; color: #41719c; }
.fold { margin: auto 10px 2px auto; }

.work { flex: 1; display: flex; min-height: 0; }
.pane { width: 270px; flex: none; padding: 0 13px 0 14px; border-right: 1px solid #c6c6c6; }
.pane p { margin: 0 0 16px; white-space: nowrap; }
.pane-head { display: flex; align-items: flex-start; height: 54px; padding: 14px 4px 0 0; }
.pane-head h2 { margin: 0 auto 0 0; font: 300 20px/26px 'Noto Sans', 'Open Sans', sans-serif; color: #2b579a; }
.pane-head button { height: 18px; margin-left: 32px; }
.search { display: flex; width: 237px; height: 24px; border: 1px solid #ababab; background: #fff; }
.search input { flex: 1; min-width: 0; padding: 0 2px; border: 0; background: none; font: inherit; }
.search input::placeholder { color: #666; opacity: 1; }
.search button { width: 16px; }
.search button:last-child { width: 14px; }
.pane-tabs { display: flex; height: 31px; margin: 10px 0 25px; }
.strip { display: flex; width: 229px; gap: 28px; overflow: hidden; }
.strip .cur { font-weight: 700; color: #2b579a; }
.next { width: 13px; background: #fff; border: 1px solid #c6c6c6; }
.vrule { display: flex; flex-direction: column; width: 22px; flex: none; padding: 2px 3px 0; overflow: hidden; }
.corner { width: 18px; height: 18px; background: #fff; border: 2px solid #d4d4d4; }
.vscale { margin: 20px 0 0 2px; }
text { font-size: 10px; fill: #444; }
rect { fill: #555; }
.desk { flex: 1; display: flex; flex-direction: column; align-items: center; padding-left: 1px; overflow: hidden; }
.hscale { margin-bottom: 19px; overflow: visible; }
.page { position: relative; flex: none; width: 793px; height: 1123px; padding: 84px 0 0; background: #fff; border: 1px solid #c6c6c6; font: 19px/25px 'DejaVu Serif', serif; color: #1b1b1b; white-space: nowrap; }
.inset { margin-left: 242px; }
.four { margin-left: 247px; }
.badge { display: block; width: 23px; height: 22px; border-radius: 50%; background: #000; color: #fff; font: 700 18px/22px 'Liberation Serif', serif; text-align: center; }
.bold.inset { font: 700 18px/26px 'DejaVu Serif Condensed', 'Liberation Serif', serif; }
.bold.first { margin-top: 9px; line-height: 25px; }
.bold.second { margin-top: 4px; margin-bottom: 27px; }
.bold.third { margin-top: 8px; font-size: 19px; }
.cols { display: grid; grid-template-columns: 275px 275px; column-gap: 53px; margin: 10px 0 0 124px; }
.spread > div > :not(:last-child) { text-align: justify; text-align-last: justify; }
.cols.last { margin: 9px 0 0 127px; column-gap: 58px; }
.ink { position: absolute; left: 0; top: 0; }
.ink path { fill: none; stroke: #000; stroke-width: 1; shape-rendering: crispEdges; }
.scroll { display: flex; flex-direction: column; width: 16px; flex: none; padding: 2px 0; background: #e6e6e6; }
.scroll button { height: 15px; background: #fff; border: 1px solid #ababab; }
.track { flex: 1; }
.thumb { height: 72%; background: #fff; border: 1px solid #ababab; border-top: 0; }

.status { display: flex; align-items: center; height: 23px; flex: none; padding: 0 7px; background: #f1f1f1; border-top: 1px solid #c6c6c6; white-space: nowrap; }
.status > span + span { margin-left: 18px; }
.status > svg { margin: 0 18px 0 17px; }
.views { display: flex; height: 100%; margin-left: auto; }
.views button { width: 38px; }
.zo { margin: 0 4px; }
.status input { appearance: none; width: 100px; height: 12px; margin: 0; background: linear-gradient(#a6a6a6, #a6a6a6) center / 100% 1px no-repeat; }
.status input::-webkit-slider-thumb { appearance: none; width: 4px; height: 12px; background: #666; }
.status > .pct { margin-left: 6px; }

.taskbar { display: flex; height: 40px; flex: none; background: linear-gradient(90deg, #030202, #15120c 35%, #14110b 65%, #030402 85%); color: #fff; }
.sys { width: 48px; }
.apps { display: flex; gap: 9px; margin-left: 7px; }
.apps button { width: 40px; }
.apps .opera { background: #8f0f12; border-bottom: 2px solid #f00a14; }
.apps .word { border-bottom: 2px solid #76b0e6; }
.dbg { background: #0a1210; font: 700 9px/12px 'Liberation Sans', sans-serif; text-align: center; }
.tray { display: flex; align-items: center; margin-left: auto; gap: 8px; }
.clock { flex-direction: column; width: 64px; line-height: 18px; }
.note { width: 30px; margin-right: 5px; }
.show { width: 1px; height: 40px; margin-right: 4px; background: #555; }
</style>
